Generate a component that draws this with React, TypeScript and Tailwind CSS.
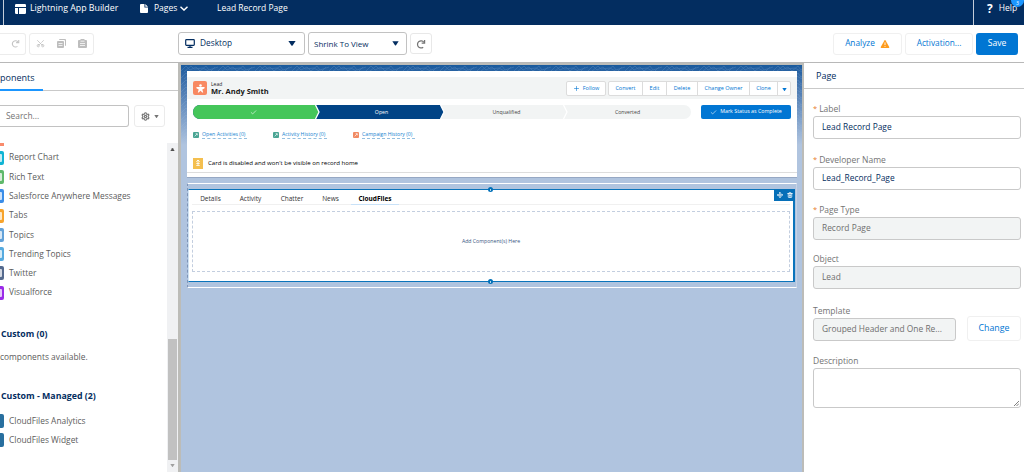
import React from 'react';
import { Scissors, Settings, Move, Trash2, Check, Plus } from 'lucide-react';
import clsx from 'clsx';

const components = [
  { name: 'Report Chart', color: 'bg-[#10b4d4]' },
  { name: 'Rich Text', color: 'bg-[#5fb96a]' },
  { name: 'Salesforce Anywhere Messages', color: 'bg-[#3a8de8]' },
  { name: 'Tabs', color: 'bg-[#f7a32b]' },
  { name: 'Topics', color: 'bg-[#62a1d8]' },
  { name: 'Trending Topics', color: 'bg-[#56aadf]' },
  { name: 'Twitter', color: 'bg-[#54698d]' },
  { name: 'Visualforce', color: 'bg-[#9b2be8]' },
];

const actions = [
  { label: 'Convert', width: 'w-[34px]' },
  { label: 'Edit', width: 'w-[24px]' },
  { label: 'Delete', width: 'w-[31px]' },
  { label: 'Change Owner', width: 'w-[52px]' },
  { label: 'Clone', width: 'w-[28px]' },
];

const relatedLinks = [
  { label: 'Open Activities (0)', color: 'bg-[#4aa594]', text: 'w-[45px]' },
  { label: 'Activity History (0)', color: 'bg-[#4aa594]', text: 'w-[45px]' },
  { label: 'Campaign History (0)', color: 'bg-[#f18a63]', text: 'w-[53px]' },
];

const tabs = [
  { label: 'Details', width: 'w-[37px]' },
  { label: 'Activity', width: 'w-[43px]' },
  { label: 'Chatter', width: 'w-[40px]' },
  { label: 'News', width: 'w-[37px]' },
];

const Caret = ({ className }: { className?: string }) => (
  <svg viewBox="0 0 8 5" className={className} fill="currentColor">
    <path d="M0.4 0h7.2L4.6 4.5Q4 5.1 3.4 4.5Z" />
  </svg>
);

const Redo = ({ className }: { className?: string }) => (
  <svg viewBox="0 0 12 12" className={className} fill="none" stroke="currentColor" strokeWidth="1.5">
    <path d="M8.6 9.8A4.2 4.2 0 1 1 9.4 4" />
    <path d="M10.3 1.2v3.7H6.8" />
  </svg>
);

const Header = () => (
  <header className="flex h-[25px] shrink-0 bg-[#032d60] text-[8.5px] whitespace-nowrap text-white">
    <div className="w-[4px] shrink-0 border-r border-[#c3ccd9]" />
    <div className="flex h-[17px] items-center">
      <svg viewBox="0 0 11 10" className="ml-[11px] h-[10px] w-[11px]" fill="currentColor">
        <path d="M0 1.2Q0 0 1.2 0h8.6Q11 0 11 1.2V3H0ZM0 4h3v6H1.2Q0 10 0 8.8ZM4 4h7v4.8q0 1.2-1.2 1.2H4Z" />
      </svg>
      <span className="ml-[4px] w-[91px] text-[8.8px]">Lightning App Builder</span>
      <svg viewBox="0 0 9 10" className="ml-[19px] h-[9px] w-[8px]" fill="currentColor">
        <path d="M0 1Q0 0 1 0h4v4h4v5q0 1-1 1H1Q0 10 0 9ZM6 0l3 3H6Z" />
      </svg>
      <span className="ml-[6px] w-[24px]">Pages</span>
      <svg viewBox="0 0 8 5" className="ml-[2px] h-[5px] w-[8px]" fill="none" stroke="currentColor" strokeWidth="1.4">
        <path d="M0.5 0.7 4 4.1 7.5 0.7" />
      </svg>
      <span className="ml-[29px]">Lead Record Page</span>
    </div>
    <div className="relative ml-auto flex w-[51px] overflow-hidden border-l border-[#c3ccd9]">
      <div className="flex h-[17px] items-center pl-[13px]">
        <b className="text-[12px]">?</b>
        <span className="ml-[6px]">Help</span>
      </div>
      <span className="absolute -top-[6px] right-0 flex h-[13px] w-[13px] items-end justify-center rounded-full bg-[#1b96ff] text-[5px] leading-[7px]">3</span>
    </div>
  </header>
);

const Toolbar = () => (
  <div className="flex h-[38px] shrink-0 items-center border-b border-[#b8b8b8] bg-white text-[8.3px] text-[#032d60]">
    <div className="flex h-[22px] w-[26px] items-center justify-center rounded-r-[3px] border border-l-0 border-[#ececec] text-[#c4c4c4]">
      <Redo className="ml-[5px] h-[9px] w-[9px]" />
    </div>
    <div className="ml-[3px] flex h-[22px] w-[65px] items-center justify-center gap-[12px] rounded-[3px] border border-[#ececec] text-[#bdbdbd]">
      <Scissors size={9} className="-rotate-90" />
      <svg viewBox="0 0 9 9" className="h-[9px] w-[9px]" fill="currentColor">
        <path d="M3 0h5q1 0 1 1v5q0 1-1 1V2q0-1-1-1H2q0-1 1-1ZM1 2h5q1 0 1 1v5q0 1-1 1H1Q0 9 0 8V3q0-1 1-1Zm.5 2v.8h4V4Zm0 2v.8h4V6Z" fillRule="evenodd" />
      </svg>
      <svg viewBox="0 0 9 9" className="h-[9px] w-[9px]" fill="currentColor">
        <path d="M1 1h1.5V0h4v1H8q1 0 1 1v6q0 1-1 1H1Q0 9 0 8V2q0-1 1-1Zm1 3v.8h5V4Zm0 2v.8h5V6ZM2.5 1.7v.8h4v-.8Z" fillRule="evenodd" />
      </svg>
    </div>
    <div className="ml-[84px] flex h-[23px] w-[127px] items-center rounded-[3px] border border-[#c2c2c2] pl-[6px] pr-[8px]">
      <svg viewBox="0 0 10 9" className="h-[9px] w-[10px]" fill="none" stroke="currentColor" strokeWidth="1.2">
        <rect x="0.7" y="0.7" width="8.6" height="5.6" rx="0.7" />
        <path d="M5 6v2M2.5 8.3h5" />
      </svg>
      <span className="ml-[5px]">Desktop</span>
      <Caret className="ml-auto h-[5px] w-[8px]" />
    </div>
    <div className="ml-[3px] flex h-[23px] w-[99px] items-center rounded-[3px] border border-[#c2c2c2] pl-[5px] pr-[7px]">
      <span className="text-[8px]">Shrink To View</span>
      <Caret className="ml-auto h-[5px] w-[7px]" />
    </div>
    <div className="ml-[3px] flex h-[21px] w-[22px] items-center justify-center rounded-[3px] border border-[#e8e8e8] text-[#747474]">
      <Redo className="h-[10px] w-[10px]" />
    </div>
    <div className="ml-auto flex h-[22px] w-[69px] items-center justify-center rounded-[3px] border border-[#f0f0f0] text-[#0176d3]">
      Analyze
      <svg viewBox="0 0 10 9" className="ml-[5px] h-[8px] w-[10px]">
        <path d="M5 0Q5.4 0 5.7.5L9.8 8q.3.9-.5 1H.7Q-.2 8.9.2 8L4.3.5Q4.6 0 5 0Z" fill="#fe9b1b" />
        <path d="M5 2.7v3M5 6.7v1" stroke="#fff" strokeWidth="1" />
      </svg>
    </div>
    <div className="ml-[3px] flex h-[22px] w-[68px] items-center justify-center rounded-[3px] border border-[#f0f0f0] text-[#0176d3]">Activation...</div>
    <div className="ml-[3px] mr-[6px] flex h-[22px] w-[42px] items-center justify-center rounded-[3px] bg-[#0176d3] text-[8.6px] text-white">Save</div>
  </div>
);

const ComponentRow = ({ name, color }: { name: string; color: string }) => (
  <div className="flex h-[19.3px] items-center whitespace-nowrap">
    <div className={clsx('flex h-[14px] w-[4px] items-center rounded-r-[2px]', color)}>
      <div className="h-[8px] w-[2px] rounded-r-[1px] bg-white/75" />
    </div>
    <span className="ml-[5px]">{name}</span>
  </div>
);

const LeftPanel = () => (
  <aside className="flex w-[180px] shrink-0 flex-col overflow-hidden bg-white text-[8.4px] text-[#5c5c5c]">
    <div className="flex h-[28px] shrink-0 border-b border-[#c9c9c9]">
      <div className="-mb-px flex w-[43px] items-center border-b-2 border-[#1b96ff] pt-[3px] text-[9px] text-[#032d60]">ponents</div>
    </div>
    <div className="mt-[14px] flex h-[22px] shrink-0">
      <div className="flex w-[129px] items-center rounded-r-[3px] border border-l-0 border-[#c2c2c2] pl-[6px] text-[8.4px] text-[#747474]">Search...</div>
      <div className="ml-[5px] flex w-[31px] items-center justify-center rounded-[3px] border border-[#ebebeb] text-[#747474]">
        <Settings size={9} strokeWidth={3} />
        <Caret className="ml-[4px] h-[3px] w-[5px]" />
      </div>
    </div>
    <div className="mt-[16px] flex min-h-0 flex-1">
      <div className="flex w-[167px] flex-col">
        <div className="h-[3px] w-[4px] bg-[#f98b6c]" />
        <div className="mt-[2px]">
          {components.map((item) => (
            <ComponentRow key={item.name} {...item} />
          ))}
        </div>
        <div className="mt-[22px] pl-px text-[8.7px] leading-[20px] font-bold text-[#032d60]">Custom (0)</div>
        <div className="mt-[3px] leading-[20px]">components available.</div>
        <div className="mt-[19px] pl-px text-[8.8px] leading-[20px] font-bold text-[#032d60]">Custom - Managed (2)</div>
        <div className="mt-[5px] [&_div_div]:bg-[#286f9f]">
          <ComponentRow name="CloudFiles Analytics" color="bg-[#286f9f]" />
          <ComponentRow name="CloudFiles Widget" color="bg-[#286f9f]" />
        </div>
      </div>
      <div className="flex w-[11px] flex-col items-center bg-[#f0f1f3]">
        <Caret className="mt-[5px] h-[3px] w-[5px] rotate-180 text-[#505050]" />
        <div className="mt-[188px] h-[121px] w-[9px] bg-[#c1c1c1]" />
        <Caret className="mt-[4px] h-[3px] w-[5px] text-[#a0a0a0]" />
      </div>
    </div>
  </aside>
);

const Stage = ({ children, className }: { children: React.ReactNode; className?: string }) => (
  <div className={clsx('flex h-full items-center justify-center pt-px', className)}>{children}</div>
);

const Pointer = ({ fill }: { fill: string }) => (
  <svg viewBox="0 0 6 14" className="absolute top-0 right-0 h-[14px] w-[6px]">
    <path d="M1.5 0 5 7 1.5 14H0V0Z" fill={fill} />
    <path d="M1.5 0 5 7 1.5 14" fill="none" stroke="#fff" strokeWidth="1.3" />
  </svg>
);

const RecordHeader = () => (
  <section className="h-[107px] border-b border-[#96a8c4] bg-white pt-[6px] text-[6px]">
    <div className="flex h-[22px] items-center bg-[#f2f4f4] pl-[6px] pr-[6px]">
      <div className="flex h-[14px] w-[14px] items-center justify-center rounded-[2px] bg-[#f88962]">
        <svg viewBox="0 0 10 10" className="h-[9px] w-[9px]" fill="#fff">
          <circle cx="5" cy="1.6" r="1.4" />
          <path d="M.5 3.4h9v1.2L7 6l1 3.5H7L5 7.5 3 9.5H2L3 6 .5 4.6Z" />
        </svg>
      </div>
      <div className="ml-[4px] flex flex-col text-[#181818]">
        <span className="text-[5px] leading-[6px]">Lead</span>
        <span className="text-[7.5px] leading-[9px] font-bold">Mr. Andy Smith</span>
      </div>
      <div className="ml-auto flex h-[15px] w-[40px] items-center justify-center rounded-[2px] border border-[#dcdcdc] bg-white text-[5.5px] text-[#0176d3]">
        <Plus size={7} className="mr-[3px]" />
        Follow
      </div>
      <div className="ml-[2px] flex h-[15px] rounded-[2px] border border-[#dcdcdc] bg-white text-[5.5px] whitespace-nowrap text-[#0176d3]">
        {actions.map((action) => (
          <div key={action.label} className={clsx('flex items-center justify-center border-r border-[#dcdcdc]', action.width)}>
            {action.label}
          </div>
        ))}
        <div className="flex w-[12px] items-center justify-center">
          <Caret className="mt-[2px] h-[3px] w-[5px]" />
        </div>
      </div>
    </div>
    <div className="mt-[6px] flex h-[14px] items-center pr-[6px] pl-[6px]">
      <div className="flex h-full w-[498px] overflow-hidden rounded-full bg-[#f2f4f4] text-[5.2px] text-[#444]">
        <div className="relative w-[127px] bg-[#014486] text-white">
          <Stage className="mr-[6px] bg-[#45c65a]">
            <Check size={7} />
          </Stage>
          <Pointer fill="#45c65a" />
        </div>
        <div className="relative w-[125px] text-white">
          <Stage className="mr-[6px] bg-[#014486] pl-[4px]">Open</Stage>
          <Pointer fill="#014486" />
        </div>
        <div className="relative w-[123px]">
          <Stage>Unqualified</Stage>
          <Pointer fill="#f2f4f4" />
        </div>
        <Stage className="flex-1 pr-[4px]">Converted</Stage>
      </div>
      <div className="ml-auto flex h-[14px] w-[90px] items-center justify-center rounded-[2px] bg-[#0176d3] text-[5.3px] whitespace-nowrap text-white">
        <Check size={7} className="mr-[3px]" />
        Mark Status as Complete
      </div>
    </div>
    <div className="mt-[11px] flex h-[9px] items-center gap-[26px] pl-[6px] text-[5.2px] whitespace-nowrap text-[#1683d0]">
      {relatedLinks.map((link) => (
        <div key={link.label} className="flex items-center">
          <div className={clsx('flex h-[6px] w-[6px] items-center justify-center rounded-[1px]', link.color)}>
            <svg viewBox="0 0 6 6" className="h-[4px] w-[4px]" fill="none" stroke="#fff">
              <path d="M1 5 4.5 1.5M2.5 1H5v2.5" />
            </svg>
          </div>
          <span className={clsx('ml-[3px] border-b border-dashed border-[#93bfe0] leading-[8px]', link.text)}>{link.label}</span>
        </div>
      ))}
    </div>
    <div className="mt-[15px] flex h-[19px] items-center border-b border-[#dddddd] pl-[6px]">
      <div className="flex h-[11px] w-[10px] items-center justify-center bg-[#f4bf4f] text-white">
        <svg viewBox="0 0 6 7" className="h-[6px] w-[6px]" fill="none" stroke="currentColor">
          <path d="M3 0v6M1 2l2-2 2 2M1 4h4M1 6.5h4" />
        </svg>
      </div>
      <span className="ml-[5px] text-[6.1px] text-black">Card is disabled and won't be visible on record home</span>
    </div>
  </section>
);

const TabsRegion = () => (
  <section className="mt-[5px] h-[105px] border-y border-l border-y-white border-l-[#7f94b8] border-r border-r-[#c6d2e5] pt-[5px] [border-left-style:dashed]">
    <div className="relative h-[93px] w-[607px] border-y border-r-2 border-l border-[#0b74bb] border-l-[#cfe3f3] bg-white px-[3px]">
      <div className="flex h-[15px] border-b border-[#f0f0f0] text-[6.5px] text-[#333]">
        {tabs.map((tab) => (
          <div key={tab.label} className={clsx('flex items-center justify-center pt-[3px]', tab.width)}>{tab.label}</div>
        ))}
        <div className="-mb-px ml-[2px] flex w-[48px] items-center justify-center border-b border-[#c9e2f8] pt-[3px] font-bold text-black">CloudFiles</div>
      </div>
      <div className="mt-[6px] flex h-[61px] items-center justify-center border border-dashed border-[#c3cedf] text-[5.2px] text-[#395783]">
        Add Component(s) Here
      </div>
      <div className="absolute -top-px -right-[2px] flex h-[12px] w-[21px] items-center justify-center gap-[4px] bg-[#056fb8] text-white">
        <Move size={6} strokeWidth={3} />
        <Trash2 size={6} strokeWidth={3} />
      </div>
      <span className="absolute -top-[3px] left-[299px] flex h-[5px] w-[5px] items-center justify-center rounded-full bg-[#0070b8] before:h-[2px] before:w-px before:bg-white/70" />
      <span className="absolute -bottom-[3px] left-[299px] flex h-[5px] w-[5px] items-center justify-center rounded-full bg-[#0070b8] before:h-[2px] before:w-px before:bg-white/70" />
    </div>
  </section>
);

const Canvas = () => (
  <main className="relative -ml-[2px] w-[626px] shrink-0 border-t-2 border-r-2 border-l-[3px] border-[#bcbcb8] bg-[#b0c4df] bg-linear-to-b from-[#195a9d] to-[#b0c4df] to-[80px] pt-[6px] pr-[5px] pl-[6px]">
    <svg className="absolute top-0 left-0 h-[76px] w-[621px] opacity-25">
      <defs>
        <pattern id="canvas-lines" width="37" height="7" patternUnits="userSpaceOnUse">
          <path d="M0 6 5 1 9 5 15 2 19 6 25 1 28 5 37 2M3 7 10 1 13 4 22 3 29 7 34 2" fill="none" stroke="#a9c6e6" strokeWidth="0.7" />
        </pattern>
      </defs>
      <rect width="621" height="76" fill="url(#canvas-lines)" />
    </svg>
    <div className="relative">
      <RecordHeader />
      <TabsRegion />
    </div>
  </main>
);

interface FieldProps {
  label: string;
  value: string;
  required?: boolean;
  disabled?: boolean;
}

const Field = ({ label, value, required, disabled }: FieldProps) => (
  <div>
    <div className="flex h-[12px] items-center">
      {required && <span className="mr-[2px] text-[7.5px] text-[#e8792b]">*</span>}
      {label}
    </div>
    <div
      className={clsx(
        'mt-[1px] flex h-[23px] items-center rounded-[3px] border border-[#c9c9c9] pl-[8px] text-[8.4px]',
        disabled ? 'bg-[#f2f4f4] text-[#6f6f6f]' : 'bg-white text-[#032d60]',
      )}
    >
      {value}
    </div>
  </div>
);

const PropertiesPanel = () => (
  <aside className="flex-1 bg-white text-[8.5px] text-[#747474]">
    <div className="flex h-[26px] items-center border-b border-[#c9c9c9] pl-[12px] text-[9px] text-[#032d60]">Page</div>
    <div className="flex flex-col pt-[14px] pr-[3px] pl-[9px]">
      <Field label="Label" value="Lead Record Page" required />
      <div className="mt-[15px]">
        <Field label="Developer Name" value="Lead_Record_Page" required />
      </div>
      <div className="mt-[14px]">
        <Field label="Page Type" value="Record Page" required disabled />
      </div>
      <div className="mt-[13px]">
        <Field label="Object" value="Lead" disabled />
      </div>
      <div className="mt-[16px] flex justify-between">
        <div className="w-[143px]">
          <Field label="Template" value="Grouped Header and One Re..." disabled />
        </div>
        <div className="mt-[11px] flex h-[25px] w-[54px] items-center justify-center rounded-[3px] border border-[#f0f0f0] text-[8.8px] text-[#0176d3]">Change</div>
      </div>
      <div className="mt-[14px] flex h-[12px] items-center">Description</div>
      <div className="mt-[1px] flex h-[40px] items-end justify-end rounded-[3px] border border-[#c9c9c9] p-px">
        <svg viewBox="0 0 6 6" className="h-[5px] w-[5px]" stroke="#555" strokeWidth="0.9">
          <path d="M0 6 6 0M3 6 6 3" />
        </svg>
      </div>
    </div>
  </aside>
);

const App: React.FC = () => {
  return (
    <div className="flex h-[472px] w-[1024px] flex-col overflow-hidden bg-white font-['Open_Sans','Noto_Sans',sans-serif]">
      <Header />
      <Toolbar />
      <div className="flex min-h-0 flex-1">
        <LeftPanel />
        <Canvas />
        <PropertiesPanel />
      </div>
    </div>
  );
};

export default App;
